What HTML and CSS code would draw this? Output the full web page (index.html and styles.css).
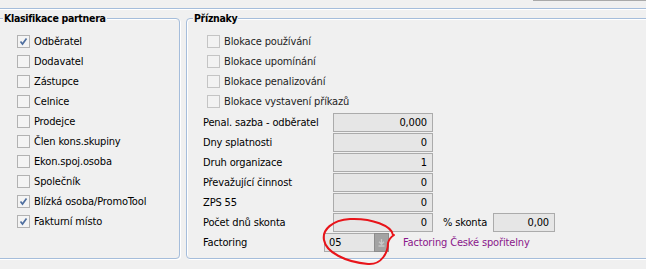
FILE: index.html
```html
<!DOCTYPE html>
<html lang="cs">
<head>
    <meta charset="UTF-8">
    <title>Partner</title>
    <link rel="stylesheet" href="styles.css">
</head>
<body>
    <div class="topbar"></div>
    <div class="frame">
        <div class="group group-left">
            <div class="group-title">Klasifikace partnera</div>
            <ul class="checks">
                <li class="check on"><span class="box"><svg width="11" height="11" viewBox="0 0 11 11"><path d="M2.5 5.5 L4.5 8 L8.5 2.5" /></svg></span>Odběratel</li>
                <li class="check"><span class="box"></span>Dodavatel</li>
                <li class="check"><span class="box"></span>Zástupce</li>
                <li class="check"><span class="box"></span>Celnice</li>
                <li class="check"><span class="box"></span>Prodejce</li>
                <li class="check"><span class="box"></span>Člen kons.skupiny</li>
                <li class="check"><span class="box"></span>Ekon.spoj.osoba</li>
                <li class="check"><span class="box"></span>Společník</li>
                <li class="check on"><span class="box"><svg width="11" height="11" viewBox="0 0 11 11"><path d="M2.5 5.5 L4.5 8 L8.5 2.5" /></svg></span>Blízká osoba/PromoTool</li>
                <li class="check on"><span class="box"><svg width="11" height="11" viewBox="0 0 11 11"><path d="M2.5 5.5 L4.5 8 L8.5 2.5" /></svg></span>Fakturní místo</li>
            </ul>
        </div>

        <div class="group group-right">
            <div class="group-title">Příznaky</div>
            <ul class="checks checks-off">
                <li class="check"><span class="box"></span>Blokace používání</li>
                <li class="check"><span class="box"></span>Blokace upomínání</li>
                <li class="check"><span class="box"></span>Blokace penalizování</li>
                <li class="check"><span class="box"></span>Blokace vystavení příkazů</li>
            </ul>
            <div class="fields">
                <div class="field-row">
                    <span class="label">Penal. sazba - odběratel</span>
                    <span class="input">0,000</span>
                </div>
                <div class="field-row">
                    <span class="label">Dny splatnosti</span>
                    <span class="input">0</span>
                </div>
                <div class="field-row">
                    <span class="label">Druh organizace</span>
                    <span class="input">1</span>
                </div>
                <div class="field-row">
                    <span class="label">Převažující činnost</span>
                    <span class="input">0</span>
                </div>
                <div class="field-row">
                    <span class="label">ZPS 55</span>
                    <span class="input">0</span>
                </div>
                <div class="field-row">
                    <span class="label">Počet dnů skonta</span>
                    <span class="input">0</span>
                    <span class="label-mid">% skonta</span>
                    <span class="input input-sm">0,00</span>
                </div>
                <div class="field-row">
                    <span class="label label-short">Factoring</span>
                    <span class="combo">
                        <span class="combo-value">05</span>
                        <span class="combo-btn"><svg width="9" height="9" viewBox="0 0 9 9"><path d="M4.5 1 V6 M2 3.8 L4.5 6.3 L7 3.8 M1.5 8 H7.5" /></svg></span>
                    </span>
                    <span class="hint">Factoring České spořitelny</span>
                </div>
            </div>
        </div>
    </div>

    <!-- red hand-drawn mark over the factoring combo -->
    <svg class="mark" width="646" height="269" viewBox="0 0 646 269">
        <path d="M393 235 C392 226 372 218 350 219 C332 220 322 230 324 240 C326 252 345 262 368 264 C382 265 388 252 388 243 C389 239 391 237 394 235" />
    </svg>
</body>
</html>
```

FILE: styles.css
```css
body {
    margin: 0;
    width: 646px;
    height: 269px;
    overflow: hidden;
    position: relative;
    background: #f0f0f0;
    font-family: "DejaVu Sans Condensed", "DejaVu Sans", sans-serif;
    font-size: 11px;
    letter-spacing: -0.15px;
    color: #000;
}
.topbar {
    height: 1px;
    margin-left: 533px;
    background: #a9a9a9;
}
.frame {
    margin-top: 7px;
    padding-top: 9px;
    border-top: 1px solid #a5bddb;
    box-shadow: inset 0 1px 0 #fff;
    display: flex;
    gap: 6px;
    margin-left: -4px;
}
.group {
    position: relative;
    box-sizing: border-box;
    height: 241px;
    border: 1px solid #a5bddb;
    border-radius: 4px;
    box-shadow: inset 1px 1px 0 #fff, 1px 1px 0 #fff;
    flex-shrink: 0;
}
.group-left {
    width: 184px;
}
.group-right {
    width: 480px;
}
.group-title {
    position: absolute;
    top: -8px;
    left: 6px;
    padding: 0 1px;
    line-height: 14px;
    font-size: 10.5px;
    letter-spacing: -0.3px;
    font-weight: bold;
    background: #f0f0f0;
}
.checks {
    list-style: none;
    margin: 0;
    padding: 12px 0 0 20px;
}
.check {
    display: flex;
    align-items: center;
    height: 20px;
    gap: 4px;
}
.box {
    box-sizing: border-box;
    width: 13px;
    height: 13px;
    border: 1px solid #b2b2b2;
    background: #f4f4f4;
    display: flex;
    align-items: center;
    justify-content: center;
}
.box path {
    fill: none;
    stroke: #4f6f9f;
    stroke-width: 1.7;
}
.checks-off .box {
    border-color: #c4c4c4;
    background: #f2f2f2;
}
.checks-off .check {
    color: #1e1e1e;
}
.fields {
    padding-top: 1px;
    padding-left: 16px;
}
.field-row {
    display: flex;
    align-items: center;
    height: 20px;
}
.label {
    width: 130px;
    flex-shrink: 0;
}
.label-short {
    width: 121px;
}
.input {
    box-sizing: border-box;
    width: 100px;
    height: 19px;
    line-height: 17px;
    padding-right: 5px;
    text-align: right;
    border: 1px solid #ababab;
    background: #e6e6e6;
}
.input-sm {
    width: 62px;
}
.label-mid {
    margin-left: 10px;
    width: 50px;
}
.combo {
    display: flex;
    height: 19px;
}
.combo-value {
    box-sizing: border-box;
    width: 50px;
    line-height: 17px;
    padding-left: 4px;
    border: 1px solid #ababab;
    border-right: none;
    background: #e6e6e6;
}
.combo-btn {
    box-sizing: border-box;
    width: 15px;
    border: 1px solid #8c8c8c;
    background: #a3a3a3;
    display: flex;
    align-items: center;
    justify-content: center;
}
.combo-btn path {
    fill: none;
    stroke: #c8c8c8;
    stroke-width: 1.3;
}
.hint {
    margin-left: 14px;
    color: #8a168a;
}
.mark {
    position: absolute;
    left: 0;
    top: 0;
    pointer-events: none;
}
.mark path {
    fill: none;
    stroke: #e8141a;
    stroke-width: 2;
    stroke-linecap: round;
}
```
